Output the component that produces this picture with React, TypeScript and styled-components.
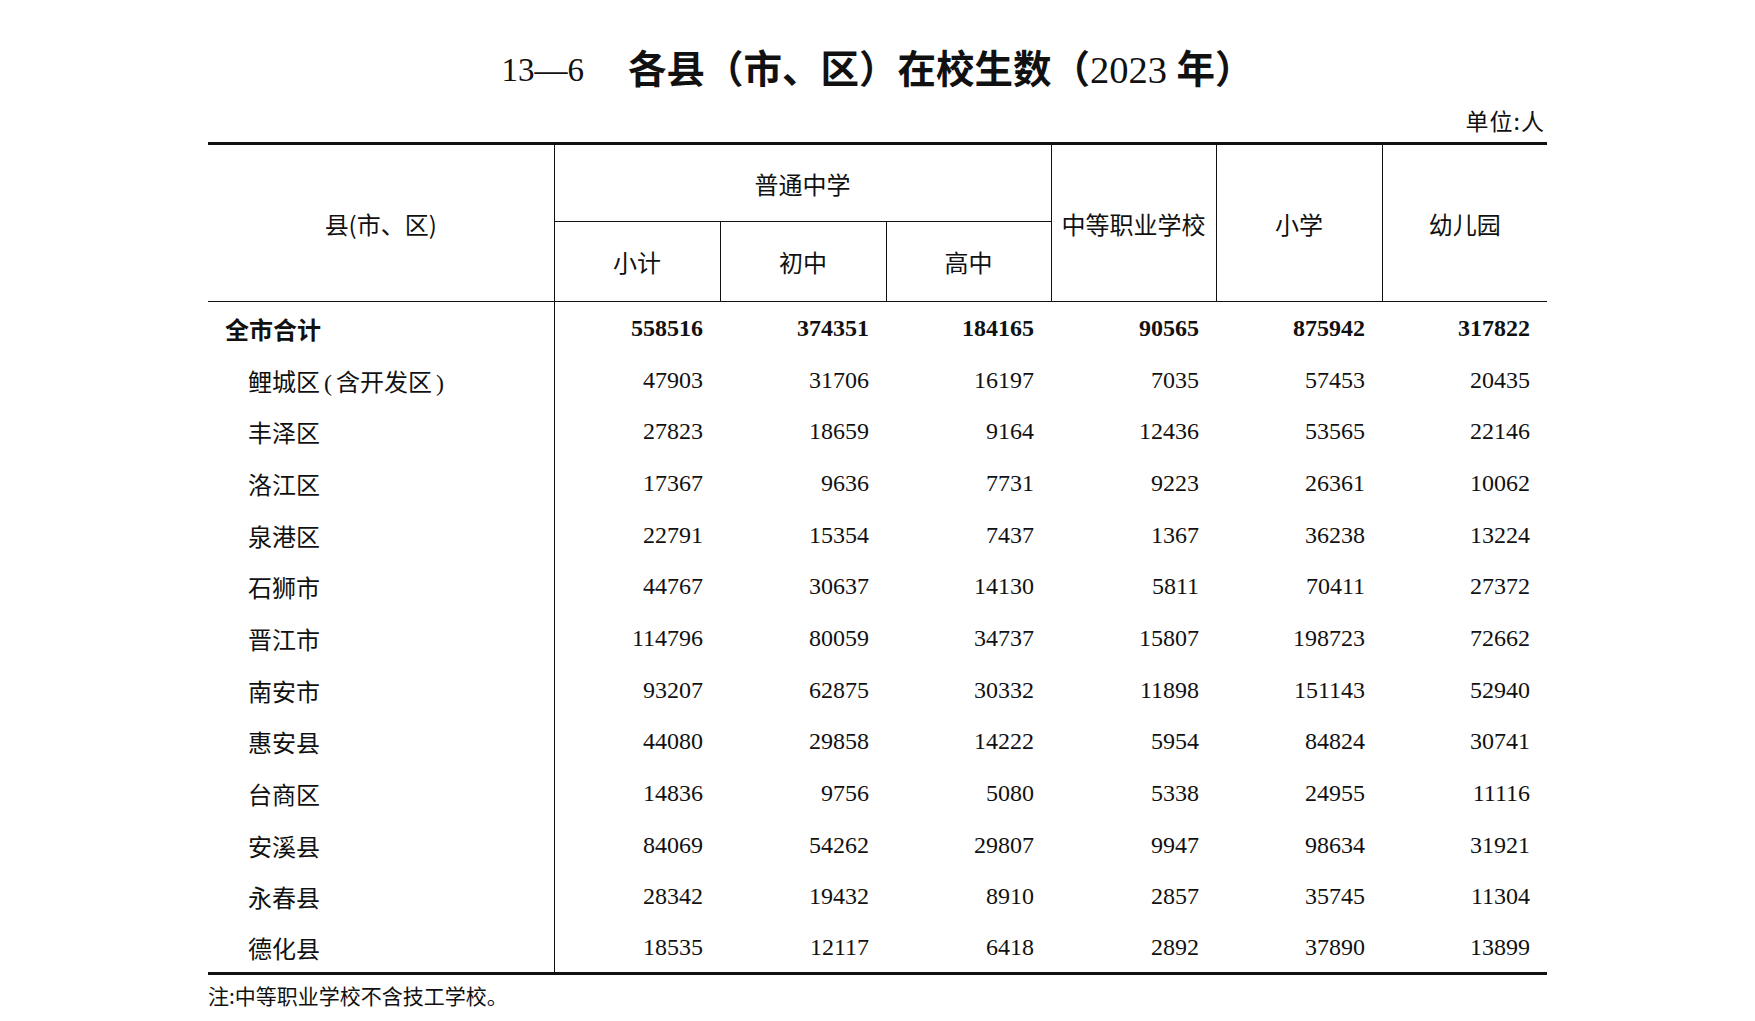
import React from 'react';
import styled, { createGlobalStyle } from 'styled-components';

const GlobalStyle = createGlobalStyle`
  html, body {
    margin: 0;
    padding: 0;
    background: #ffffff;
  }
  body {
    font-family: 'Liberation Serif', 'Noto Sans CJK SC', serif;
    color: #111;
  }
`;

const Page = styled.div`
  width: 1339px;
  margin-left: 208px;
  padding-top: 45px;
`;

const TitleRow = styled.div`
  display: flex;
  justify-content: center;
  align-items: center;
  gap: 44px;
  height: 50px;
`;

const TitleNo = styled.span`
  font-family: 'Liberation Serif', serif;
  font-size: 33px;
`;

const TitleText = styled.h1`
  margin: 0;
  font-family: 'Liberation Serif', 'Noto Sans CJK SC', serif;
  font-size: 38.5px;
  font-weight: 700;
  line-height: 50px;

  & > span {
    font-weight: 400;
  }
`;

const Unit = styled.div`
  margin-top: 13px;
  height: 24px;
  line-height: 24px;
  text-align: right;
  font-family: 'Noto Sans CJK SC', sans-serif;
  font-size: 23px;
  letter-spacing: 1px;
  padding-right: 2px;
`;

const Table = styled.table`
  margin-top: 10px;
  width: 1339px;
  table-layout: fixed;
  border-collapse: collapse;
  border-top: 3px solid #111;
  border-bottom: 3px solid #111;
`;

const HeadCell = styled.th<{ $h?: number; $right?: boolean }>`
  height: ${(p) => p.$h ?? 76}px;
  padding: 0;
  font-family: 'Noto Sans CJK SC', sans-serif;
  font-size: 24px;
  font-weight: 400;
  text-align: center;
  vertical-align: middle;
  white-space: nowrap;
  border-right: ${(p) => (p.$right === false ? 'none' : '1px solid #111')};
  border-bottom: 1px solid #111;
`;

const Row = styled.tr`
  height: 51.7px;
`;

const NameCell = styled.td<{ $total?: boolean }>`
  padding: 2px 0 0 ${(p) => (p.$total ? 17 : 40)}px;
  font-family: 'Liberation Serif', 'Noto Sans CJK SC', serif;
  font-size: 24px;
  font-weight: ${(p) => (p.$total ? 700 : 400)};
  white-space: nowrap;
  border-right: 1px solid #111;
  vertical-align: middle;
`;

const Paren = styled.span`
  padding: 0 4px;
`;

const NumCell = styled.td<{ $total?: boolean }>`
  padding: 2px 17px 0 0;
  text-align: right;
  font-family: 'Liberation Serif', serif;
  font-size: 24px;
  font-weight: ${(p) => (p.$total ? 700 : 400)};
  vertical-align: middle;
`;

const Note = styled.div`
  margin-top: 6px;
  font-family: 'Noto Sans CJK SC', sans-serif;
  font-size: 21px;
  line-height: 28px;
`;

const colWidths = [346, 166, 166, 165, 165, 166, 165];

const rows: [React.ReactNode, number[]][] = [
  ['全市合计', [558516, 374351, 184165, 90565, 875942, 317822]],
  [
    <>
      鲤城区<Paren>(</Paren>含开发区<Paren>)</Paren>
    </>,
    [47903, 31706, 16197, 7035, 57453, 20435],
  ],
  ['丰泽区', [27823, 18659, 9164, 12436, 53565, 22146]],
  ['洛江区', [17367, 9636, 7731, 9223, 26361, 10062]],
  ['泉港区', [22791, 15354, 7437, 1367, 36238, 13224]],
  ['石狮市', [44767, 30637, 14130, 5811, 70411, 27372]],
  ['晋江市', [114796, 80059, 34737, 15807, 198723, 72662]],
  ['南安市', [93207, 62875, 30332, 11898, 151143, 52940]],
  ['惠安县', [44080, 29858, 14222, 5954, 84824, 30741]],
  ['台商区', [14836, 9756, 5080, 5338, 24955, 11116]],
  ['安溪县', [84069, 54262, 29807, 9947, 98634, 31921]],
  ['永春县', [28342, 19432, 8910, 2857, 35745, 11304]],
  ['德化县', [18535, 12117, 6418, 2892, 37890, 13899]],
];

export default function App() {
  return (
    <>
      <GlobalStyle />
      <Page>
        <TitleRow>
          <TitleNo>13—6</TitleNo>
          <TitleText>
            各县（市、区）在校生数（<span>2023</span> 年）
          </TitleText>
        </TitleRow>
        <Unit>单位:人</Unit>
        <Table>
          <colgroup>
            {colWidths.map((w, i) => (
              <col key={i} style={{ width: w }} />
            ))}
          </colgroup>
          <thead>
            <tr>
              <HeadCell rowSpan={2}>县(市、区)</HeadCell>
              <HeadCell colSpan={3} $h={76}>普通中学</HeadCell>
              <HeadCell rowSpan={2}>中等职业学校</HeadCell>
              <HeadCell rowSpan={2}>小学</HeadCell>
              <HeadCell rowSpan={2} $right={false}>幼儿园</HeadCell>
            </tr>
            <tr>
              <HeadCell $h={79}>小计</HeadCell>
              <HeadCell $h={79}>初中</HeadCell>
              <HeadCell $h={79}>高中</HeadCell>
            </tr>
          </thead>
          <tbody>
            {rows.map(([name, nums], i) => (
              <Row key={i}>
                <NameCell $total={i === 0}>{name}</NameCell>
                {nums.map((n, j) => (
                  <NumCell key={j} $total={i === 0}>
                    {n}
                  </NumCell>
                ))}
              </Row>
            ))}
          </tbody>
        </Table>
        <Note>注:中等职业学校不含技工学校。</Note>
      </Page>
    </>
  );
}
